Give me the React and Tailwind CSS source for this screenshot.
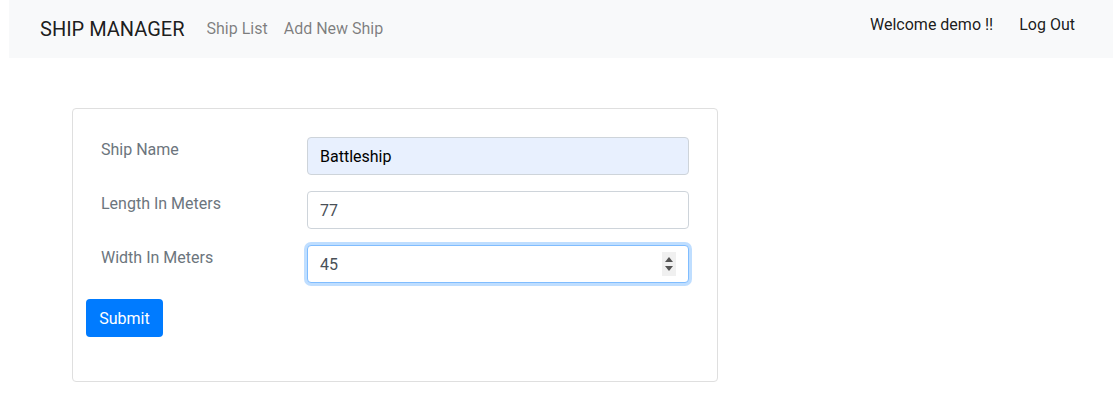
export default function App() {
  return (
    <div className="min-h-[412px] bg-white font-['Roboto','Liberation_Sans',sans-serif] text-[16px] text-[#212529]">
      {/* Navbar */}
      <nav className="ml-[9px] flex h-[58px] items-center bg-[#f8f9fa] pl-[31px] pr-[38px]">
        <span className="mr-[22px] text-[20px] leading-[30px] text-black/90">SHIP MANAGER</span>
        <a className="mr-[16px] leading-[24px] text-black/50">Ship List</a>
        <a className="leading-[24px] text-black/50">Add New Ship</a>
        <div className="ml-auto flex items-center gap-[26px] pb-[8px]">
          <span className="text-black/90">Welcome demo !!</span>
          <a className="text-black/90">Log Out</a>
        </div>
      </nav>

      {/* Form card */}
      <div className="ml-[72px] mt-[50px] w-[646px] rounded-[4px] border border-[#dfdfdf] pb-[44px] pl-[13px] pt-[28px]">
        <div className="flex flex-col gap-[16px]">
          <FormRow label="Ship Name">
            <div className="flex h-[38px] items-center rounded-[4px] border border-[#ced4da] bg-[#e8f0fe] px-[12px] pt-[1px] text-black">
              Battleship
            </div>
          </FormRow>
          <FormRow label="Length In Meters">
            <div className="flex h-[38px] items-center rounded-[4px] border border-[#ced4da] bg-white px-[12px] pt-[1px] text-[#495057]">
              77
            </div>
          </FormRow>
          <FormRow label="Width In Meters">
            <div className="relative flex h-[38px] items-center rounded-[4px] border border-[#80bdff] bg-white px-[12px] pt-[1px] text-[#495057] shadow-[0_0_0_3px_rgba(0,123,255,0.25)]">
              45
              <div className="absolute right-[12px] top-[6px] flex h-[24px] w-[14px] flex-col items-center justify-center gap-[4px] bg-[#f0f0f0]">
                <svg width="8" height="5" viewBox="0 0 8 5"><path d="M4 0 L8 5 L0 5 Z" fill="#555" /></svg>
                <svg width="8" height="5" viewBox="0 0 8 5"><path d="M0 0 L8 0 L4 5 Z" fill="#555" /></svg>
              </div>
            </div>
          </FormRow>
        </div>
        <button className="mt-[16px] h-[38px] w-[77px] rounded-[4px] bg-[#007bff] pt-[1px] text-white">Submit</button>
      </div>
    </div>
  )
}

function FormRow({ label, children }) {
  return (
    <div className="flex items-start">
      <label className="w-[221px] pl-[15px] pt-[1px] leading-[24px] text-[#6c757d]">{label}</label>
      <div className="w-[382px]">{children}</div>
    </div>
  )
}
